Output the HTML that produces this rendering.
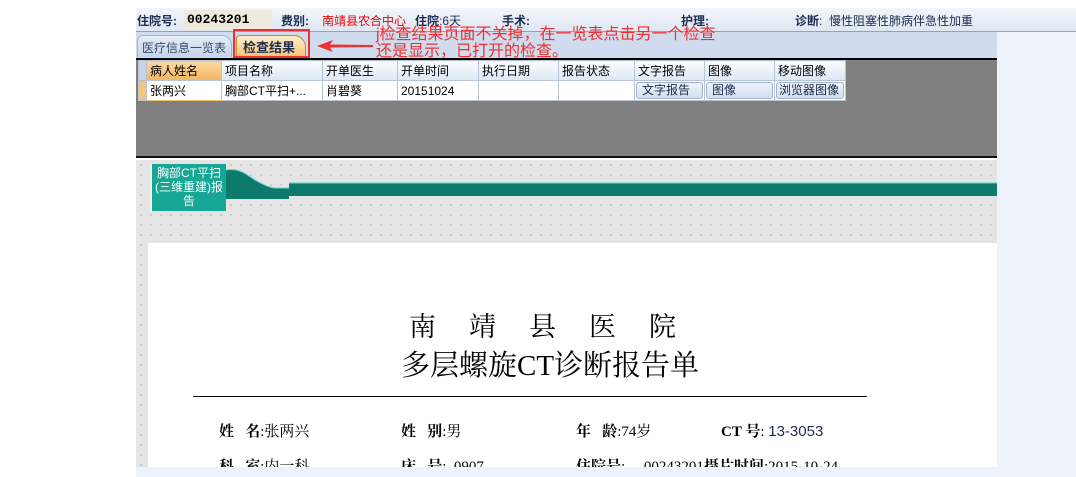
<!DOCTYPE html>
<html><head><meta charset="utf-8"><style>
*{margin:0;padding:0;box-sizing:border-box}
body{width:1076px;height:477px;overflow:hidden;background:#fff;font-family:"Liberation Sans","Noto Sans CJK SC",sans-serif;font-size:12px;position:relative}
.abs{position:absolute;white-space:nowrap}
.hdr{left:136px;top:8px;width:940px;height:24px;background:linear-gradient(#f2f5fb,#dfe7f3);border-bottom:1px solid #8aa3c6}
.rightbg{left:997px;top:32px;width:79px;height:445px;background:#eef2fb}
.tabbar{left:136px;top:32px;width:861px;height:26px;background:#d0dcee}
.gray{left:136px;top:58px;width:861px;height:100px;background:#808080;border-top:2px solid #000;border-bottom:2px solid #111}
.dots{left:136px;top:160px;width:861px;height:307px;background-color:#e4e4e4;background-image:radial-gradient(#c8c8c8 0.8px,transparent 1.2px);background-size:10px 10px}
.report{left:148px;top:243px;width:849px;height:224px;background:#fff}
.bottom{left:136px;top:467px;width:940px;height:10px;background:#eef2fb}
table{border-collapse:collapse;font-size:12px}
td{border:1px solid #b8c4d6;height:20px;padding:0 3px;white-space:nowrap}
.th td{background:linear-gradient(#fbfcfe,#dde7f5)}
.btn{display:block;border:1px solid #9fb3cf;border-radius:3px;background:linear-gradient(#eef3fa,#d3dfee);color:#1c2a4a;padding:0 5px;height:17px;line-height:15px}
.b{font-weight:bold;color:#1e2d4f}
.rep{font-family:"Liberation Serif","Noto Serif CJK SC",serif;color:#000}
</style></head><body>
<div class="abs hdr"></div>
<div class="abs" style="left:137px;top:12px;font-size:12px;color:#1e2d4f"><b>住院号:</b></div>
<div class="abs" style="left:184px;top:10px;width:88px;height:20px;background:#efeadb;padding:2px 3px;font-weight:bold;font-size:13px;font-family:'Liberation Mono',monospace">00243201</div>
<div class="abs b" style="left:281px;top:12px">费别:</div>
<div class="abs" style="left:322px;top:12px;color:#e00">南靖县农合中心</div>
<div class="abs" style="left:415px;top:12px;color:#1e2d4f"><b>住院</b>:6天</div>
<div class="abs b" style="left:502px;top:12px">手术:</div>
<div class="abs b" style="left:681px;top:12px">护理:</div>
<div class="abs" style="left:795px;top:12px;color:#1e2d4f"><b>诊断</b>:&nbsp;&nbsp;慢性阻塞性肺病伴急性加重</div>
<div class="abs rightbg"></div>
<div class="abs tabbar"></div>
<div class="abs" style="left:137px;top:35px;width:95px;height:22px;border:1px solid #9fb3cf;border-bottom:none;border-radius:6px 10px 0 0;background:linear-gradient(#e6edf7,#c3d3ea);color:#3a4a6a;font-size:12px;padding:3px 4px;overflow:hidden">医疗信息一览表</div>
<div class="abs" style="left:236px;top:35px;width:70px;height:23px;border:1px solid #c08a3a;border-bottom:none;border-radius:4px 12px 0 0;background:linear-gradient(#fff0d0,#f6c070);font-weight:bold;color:#1e2d4f;font-size:13px;padding:1px 6px">检查结果</div>
<div class="abs" style="left:233px;top:29px;width:77px;height:29px;border:2px solid #f03030"></div>
<svg class="abs" style="left:315px;top:38px" width="60" height="16"><path d="M2 8 L18 2 L15 6.5 L58 7 L58 9 L15 9.5 L18 14 Z" fill="#f03030"/></svg>
<div class="abs" style="left:376px;top:26px;color:#f03030;font-size:16px;line-height:17px">j检查结果页面不关掉，在一览表点击另一个检查<br>还是显示，已打开的检查。</div>
<div class="abs gray"></div>
<table class="abs" style="left:138px;top:60px">
<tr class="th"><td style="width:8px;padding:0;background:#c8d4e6"></td><td style="width:75px;background:linear-gradient(#fbd9a0,#f3b660)">病人姓名</td><td style="width:101px">项目名称</td><td style="width:75px">开单医生</td><td style="width:81px">开单时间</td><td style="width:80px">执行日期</td><td style="width:76px">报告状态</td><td style="width:70px">文字报告</td><td style="width:70px">图像</td><td style="width:71px">移动图像</td></tr>
<tr style="background:#fff"><td style="padding:0;background:#f7c57a"></td><td style="border:1px solid #f3c070">张两兴</td><td>胸部CT平扫+...</td><td>肖碧葵</td><td>20151024</td><td></td><td></td><td style="padding:1px"><span class="btn">文字报告</span></td><td style="padding:1px"><span class="btn">图像</span></td><td style="padding:1px"><span class="btn" style="padding:0 2px">浏览器图像</span></td></tr>
</table>
<div class="abs dots"></div>
<div class="abs" style="left:150px;top:164px;width:76px;height:47px;background:#15a694;border-left:2px solid #f0f0f0;color:#fff;font-size:12px;line-height:14px;text-align:center;padding-top:2px">胸部CT平扫<br>(三维重建)报<br>告</div>
<svg class="abs" style="left:226px;top:168px" width="771" height="38"><path d="M0 2 Q10 0 20 6 Q40 20 50 20 L63 20 L63 15 L771 15 L771 28 L63 28 L63 31 L0 31 Z" fill="#0e7a6c"/><path d="M0 2 Q10 0 20 6 Q40 20 50 20 L63 20 M63 15 L771 15" stroke="#5fd8c8" stroke-width="1" fill="none"/></svg>
<div class="abs report"></div>
<div class="abs rep" style="left:409px;top:305px;font-size:27px;letter-spacing:33px">南靖县医院</div>
<div class="abs rep" style="left:401px;top:343px;font-size:29px">多层螺旋CT诊断报告单</div>
<div class="abs" style="left:193px;top:396px;width:674px;height:1px;background:#000"></div>
<div class="abs rep" style="left:219px;top:420px;font-size:15px"><b>姓&nbsp;&nbsp;&nbsp;名</b>:张两兴</div>
<div class="abs rep" style="left:401px;top:420px;font-size:15px"><b>姓&nbsp;&nbsp;&nbsp;别</b>:男</div>
<div class="abs rep" style="left:576px;top:420px;font-size:15px"><b>年&nbsp;&nbsp;&nbsp;龄</b>:74岁</div>
<div class="abs rep" style="left:721px;top:420px;font-size:15px"><b>CT 号</b>:&nbsp;<span style="font-family:'Liberation Sans',sans-serif;color:#1e2d4f">13-3053</span></div>
<div class="abs rep" style="left:219px;top:455px;font-size:15px"><b>科&nbsp;&nbsp;&nbsp;室</b>:内一科</div>
<div class="abs rep" style="left:401px;top:455px;font-size:15px"><b>床&nbsp;&nbsp;&nbsp;号</b>:&nbsp;&nbsp;0907</div>
<div class="abs rep" style="left:576px;top:455px;font-size:15px"><b>住院号</b>:&nbsp;&nbsp;&nbsp;&nbsp;&nbsp;00243201<b>摄片时间</b>:2015-10-24</div>
<div class="abs bottom"></div>
</body></html>
